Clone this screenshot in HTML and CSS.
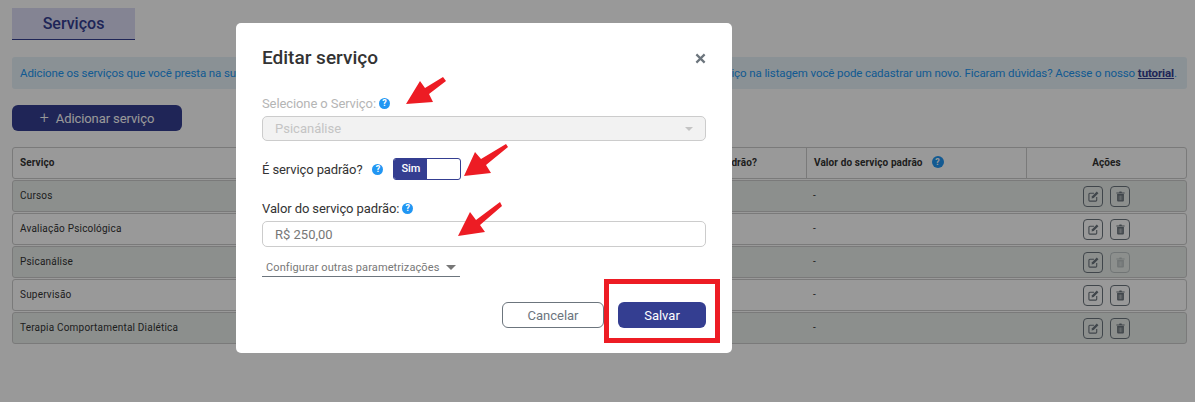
FILE: index.html
```html
<!DOCTYPE html>
<html lang="pt-BR">
<head>
    <meta charset="UTF-8">
    <meta name="viewport" content="width=device-width, initial-scale=1.0">
    <title>Serviços</title>
    <link rel="stylesheet" href="styles.css">
</head>
<body>

    <svg width="0" height="0" class="sprites">
        <symbol id="icon-edit" viewBox="0 0 12 12">
            <path d="M6.500 2.500H2a1 1 0 0 0-1 1V10a1 1 0 0 0 1 1h6.500a1 1 0 0 0 1-1V6.500" fill="none" stroke="currentColor" stroke-width="1.200"/>
            <path d="M9.600.6l1.800 1.800-5.200 5.200-2.300.5.5-2.300z" fill="currentColor"/>
        </symbol>
        <symbol id="icon-trash" viewBox="0 0 12 12">
            <path d="M1.500 1.500h3l.4-.9h2.200l.4.9h3v1.200h-9z" fill="currentColor"/>
            <path d="M2.300 3.400h7.400v7a1 1 0 0 1-1 1H3.300a1 1 0 0 1-1-1zM4.200 5v5h.5V5zM5.750 5v5h.5V5zM7.300 5v5h.5V5z" fill="currentColor" fill-rule="evenodd"/>
        </symbol>
    </svg>

    <main class="page">
        <h1 class="tab-title">Serviços</h1>

        <div class="info-box">
            <span>Adicione os serviços que você presta na sua clínica.</span>
            <span>Caso não encontre o serviço na listagem você pode cadastrar um novo. Ficaram dúvidas? Acesse o nosso <a href="#">tutorial</a>.</span>
        </div>

        <button class="btn-add"><span class="plus">+</span> Adicionar serviço</button>

        <div class="table">
            <div class="row head">
                <div class="cell">Serviço</div>
                <div class="cell">É serviço padrão?</div>
                <div class="cell">Valor do serviço padrão <span class="help dark">?</span></div>
                <div class="cell center">Ações</div>
            </div>
            <div class="row odd">
                <div class="cell">Cursos</div>
                <div class="cell">Não</div>
                <div class="cell">-</div>
                <div class="cell actions">
                    <button class="icon-btn"><svg><use href="#icon-edit"/></svg></button>
                    <button class="icon-btn"><svg><use href="#icon-trash"/></svg></button>
                </div>
            </div>
            <div class="row">
                <div class="cell">Avaliação Psicológica</div>
                <div class="cell">Não</div>
                <div class="cell">-</div>
                <div class="cell actions">
                    <button class="icon-btn"><svg><use href="#icon-edit"/></svg></button>
                    <button class="icon-btn"><svg><use href="#icon-trash"/></svg></button>
                </div>
            </div>
            <div class="row odd">
                <div class="cell">Psicanálise</div>
                <div class="cell">Sim</div>
                <div class="cell">-</div>
                <div class="cell actions">
                    <button class="icon-btn"><svg><use href="#icon-edit"/></svg></button>
                    <button class="icon-btn off"><svg><use href="#icon-trash"/></svg></button>
                </div>
            </div>
            <div class="row">
                <div class="cell">Supervisão</div>
                <div class="cell">Não</div>
                <div class="cell">-</div>
                <div class="cell actions">
                    <button class="icon-btn"><svg><use href="#icon-edit"/></svg></button>
                    <button class="icon-btn"><svg><use href="#icon-trash"/></svg></button>
                </div>
            </div>
            <div class="row odd">
                <div class="cell">Terapia Comportamental Dialética</div>
                <div class="cell">Não</div>
                <div class="cell">-</div>
                <div class="cell actions">
                    <button class="icon-btn"><svg><use href="#icon-edit"/></svg></button>
                    <button class="icon-btn"><svg><use href="#icon-trash"/></svg></button>
                </div>
            </div>
        </div>
    </main>

    <div class="overlay">
        <div class="modal">
            <div class="modal-header">
                <h2>Editar serviço</h2>
                <svg class="close" width="11" height="11" viewBox="0 0 12 12"><path d="M1.500 1.500l9 9M10.500 1.500l-9 9" stroke="currentColor" stroke-width="2.400"/></svg>
            </div>

            <label class="label muted">Selecione o Serviço: <span class="help">?</span></label>
            <div class="select">Psicanálise<span class="caret"></span></div>

            <div class="toggle-row">
                <label class="label">É serviço padrão?</label>
                <span class="help">?</span>
                <div class="toggle"><span class="toggle-on">Sim</span></div>
            </div>

            <label class="label">Valor do serviço padrão: <span class="help">?</span></label>
            <div class="input">R$ 250,00</div>

            <div class="more">Configurar outras parametrizações<span class="caret"></span></div>

            <div class="modal-footer">
                <button class="btn-cancel">Cancelar</button>
                <button class="btn-save">Salvar</button>
            </div>
        </div>
    </div>

    <!-- marcacoes feitas em cima do print -->
    <svg class="marks" width="1195" height="402" viewBox="0 0 1195 402">
        <path d="M406 104L420 81 425 88 443 77 446 81 429 94 433 102z" fill="#ed1c24"/>
        <path d="M464 176L475 152 481 159 506 144 508 147 486 165 491 173z" fill="#ed1c24"/>
        <path d="M458 236L470 212 476 220 500 202 502 206 480 225 485 232z" fill="#ed1c24"/>
    </svg>
    <div class="mark-box"></div>

</body>
</html>
```

FILE: styles.css
```css
* {
    box-sizing: border-box;
}

body {
    margin: 0;
    height: 402px;
    overflow: hidden;
    font-family: Roboto, 'Liberation Sans', sans-serif;
    background: #fff;
    color: #333;
}

.sprites {
    display: block;
}

.page {
    padding: 8px 8px 0 12px;
}

.tab-title {
    width: 123px;
    height: 32px;
    margin: 0;
    background: #dcdcf5;
    border-bottom: 1px solid #343e91;
    color: #343e91;
    font-size: 16px;
    font-weight: 500;
    line-height: 31px;
    text-align: center;
}

.info-box {
    display: flex;
    justify-content: space-between;
    height: 32px;
    margin-top: 17px;
    padding: 0 10px 0 8px;
    background: #e6f2f8;
    border-radius: 3px;
    color: #2196f3;
    font-size: 11.500px;
    letter-spacing: -0.1px;
    line-height: 32px;
    white-space: nowrap;
}

.info-box a {
    color: #343e91;
    font-weight: 700;
}

.btn-add {
    display: block;
    width: 170px;
    height: 26px;
    margin-top: 16px;
    padding: 0 0 2px;
    border: none;
    border-radius: 6px;
    background: #343e91;
    color: #fff;
    font-family: inherit;
    font-size: 13px;
    letter-spacing: -0.1px;
}

.plus {
    margin-right: 4px;
    font-size: 16px;
    font-weight: 300;
}

.table {
    margin-top: 16px;
}

.row {
    display: grid;
    grid-template-columns: 648px 145px 220px 160px;
    height: 32px;
    margin-bottom: 1px;
    border: 1px solid #ccc;
    border-radius: 3px;
    font-size: 10px;
    letter-spacing: 0.2px;
}

.row.head {
    letter-spacing: 0.1px;
    font-weight: 700;
}

.row.odd {
    background: #e9efec;
}

.cell {
    display: flex;
    align-items: center;
    padding: 0 7px 2px;
}

.head .cell + .cell {
    border-left: 1px solid #ccc;
}

.head .cell:nth-child(2) {
    justify-content: flex-end;
    padding-right: 49px;
    border-left: none;
}

.center {
    justify-content: center;
}

.actions {
    justify-content: center;
    gap: 7px;
    padding: 0 0 0 1px;
}

.icon-btn {
    width: 20px;
    height: 21px;
    padding: 0;
    display: flex;
    align-items: center;
    justify-content: center;
    background: transparent;
    border: 1px solid #6c757d;
    border-radius: 4px;
    color: #6c757d;
}

.icon-btn svg {
    width: 11px;
    height: 11px;
}

.icon-btn.off {
    opacity: 0.35;
}

.overlay {
    position: fixed;
    inset: 0;
    background: rgba(0, 0, 0, 0.4);
}

.modal {
    width: 496px;
    height: 330px;
    margin: 23px 0 0 236px;
    padding: 21px 26px 0;
    background: #fff;
    border-radius: 5px;
}

.modal-header {
    display: flex;
    justify-content: space-between;
    align-items: center;
    height: 26px;
    margin-bottom: 25px;
}

.modal-header h2 {
    margin: 0;
    font-size: 19px;
    font-weight: 500;
    color: #333;
}

.close {
    margin-top: 3px;
    color: #6c757d;
}

.label {
    display: flex;
    align-items: center;
    gap: 3px;
    height: 16px;
    font-size: 13px;
    letter-spacing: -0.1px;
    color: #333;
}

.label.muted {
    color: #b5b5b5;
}

.help {
    display: inline-flex;
    align-items: center;
    justify-content: center;
    width: 11px;
    height: 11px;
    border-radius: 50%;
    background: #2196f3;
    color: #fff;
    font-size: 9px;
    font-weight: 700;
    letter-spacing: 0;
}

.help.dark {
    width: 12px;
    height: 12px;
    margin-left: 9px;
}

.select,
.input {
    display: flex;
    align-items: center;
    justify-content: space-between;
    height: 25px;
    margin-top: 5px;
    padding: 0 12px 0 12px;
    border: 1px solid #ccc;
    border-radius: 5px;
    font-size: 13px;
}

.select {
    background: #f2f2f2;
    color: #c4c4c4;
}

.input {
    height: 26px;
    color: #777;
}

.caret {
    width: 0;
    height: 0;
    border-left: 4px solid transparent;
    border-right: 4px solid transparent;
    border-top: 4px solid #c4c4c4;
}

.toggle-row {
    display: flex;
    align-items: center;
    height: 22px;
    margin-top: 17px;
    margin-bottom: 20px;
}

.toggle-row .help {
    margin-left: 10px;
}

.toggle {
    width: 68px;
    height: 22px;
    margin-left: 10px;
    border: 1px solid #343e91;
    border-radius: 3px;
    overflow: hidden;
    background: #fff;
}

.toggle-on {
    display: block;
    width: 33px;
    height: 100%;
    background: #343e91;
    color: #fff;
    font-size: 11px;
    font-weight: 500;
    line-height: 20px;
    text-align: center;
}

.more {
    display: flex;
    align-items: center;
    justify-content: space-between;
    width: 198px;
    height: 18px;
    margin-top: 12px;
    padding: 0 4px;
    border-bottom: 1px solid #6c757d;
    color: #777;
    font-size: 11px;
    letter-spacing: 0.1px;
    white-space: nowrap;
}

.more .caret {
    border-left-width: 5px;
    border-right-width: 5px;
    border-top: 5px solid #777;
}

.modal-footer {
    display: flex;
    justify-content: flex-end;
    gap: 14px;
    margin-top: 25px;
}

.btn-cancel,
.btn-save {
    height: 26px;
    border-radius: 6px;
    font-family: inherit;
    font-size: 13px;
}

.btn-cancel {
    width: 102px;
    background: #fff;
    border: 1px solid #6c757d;
    color: #6c757d;
}

.btn-save {
    width: 88px;
    background: #343e91;
    border: none;
    color: #fff;
}

.marks {
    position: absolute;
    top: 0;
    left: 0;
}

.mark-box {
    position: absolute;
    top: 279px;
    left: 604px;
    width: 116px;
    height: 64px;
    border: 5px solid #ed1c24;
}
```
